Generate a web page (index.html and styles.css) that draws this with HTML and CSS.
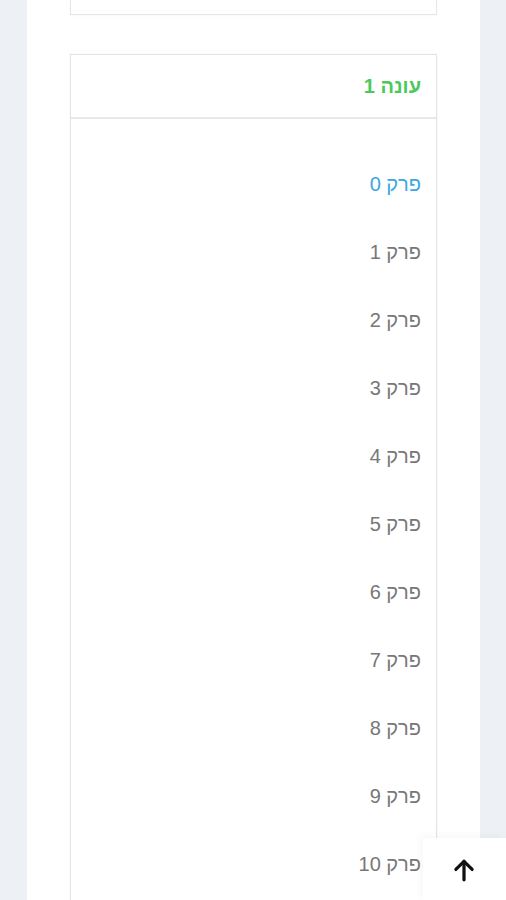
FILE: index.html
```html
<!DOCTYPE html>
<html lang="he" dir="rtl">
<head>
<meta charset="utf-8">
<title>עונה 1</title>
<link rel="stylesheet" href="styles.css">
</head>
<body>
<div class="page">
  <div class="column">
    <div class="top-card"></div>
    <div class="season-card">
      <div class="season-header">עונה 1</div>
      <ul class="episodes">
        <li class="episode active">פרק 0</li>
        <li class="episode">פרק 1</li>
        <li class="episode">פרק 2</li>
        <li class="episode">פרק 3</li>
        <li class="episode">פרק 4</li>
        <li class="episode">פרק 5</li>
        <li class="episode">פרק 6</li>
        <li class="episode">פרק 7</li>
        <li class="episode">פרק 8</li>
        <li class="episode">פרק 9</li>
        <li class="episode">פרק 10</li>
      </ul>
    </div>
  </div>
</div>
<button class="to-top" aria-label="למעלה">
  <svg width="26" height="26" viewBox="0 0 24 24" fill="none" stroke="#111" stroke-width="3" stroke-linecap="round" stroke-linejoin="round"><path d="M12 21V4"/><path d="M4.5 11.5L12 4l7.5 7.5"/></svg>
</button>
</body>
</html>
```
FILE: styles.css
```css
* { box-sizing: border-box; }
html, body { margin: 0; padding: 0; }
body {
  background: #edf1f5;
  font-family: Roboto, "Liberation Sans", sans-serif;
  overflow: hidden;
  height: 900px;
}
.page {
  display: flex;
  justify-content: flex-start;
  direction: ltr;
  padding-left: 27px;
}
.column {
  direction: rtl;
  width: 453px;
  background: #fff;
  min-height: 900px;
  padding: 0 43px 0 43px;
}
.top-card {
  height: 15px;
  border: 1px solid #e6e6e6;
  border-top: none;
  box-shadow: 0 1px 2px rgba(0,0,0,0.03);
}
.season-card {
  margin-top: 39px;
  border: 1px solid #e3e3e3;
  box-shadow: 0 0 2px rgba(0,0,0,0.05);
  padding-bottom: 20px;
}
.season-header {
  height: 64px;
  display: flex;
  align-items: center;
  padding: 0 15px;
  color: #4cc85a;
  font-weight: bold;
  font-size: 20px;
  font-family: "Liberation Sans", Roboto, sans-serif;
  border-bottom: 2px solid #e8e8e8;
}
.season-header, .episode { unicode-bidi: plaintext; }
.episodes {
  list-style: none;
  margin: 0;
  padding: 31px 0 0 0;
}
.episode {
  height: 68px;
  display: flex;
  align-items: center;
  padding: 0 15px;
  font-size: 20px;
  font-family: "Liberation Sans", Roboto, sans-serif;
  color: #777;
}
.episode.active { color: #3aa7e2; }
.to-top {
  position: fixed;
  right: 0;
  bottom: 0;
  width: 83px;
  height: 62px;
  border: none;
  background: #fff;
  box-shadow: -2px -2px 8px rgba(0,0,0,0.04);
  display: flex;
  align-items: center;
  justify-content: center;
  padding: 0;
  cursor: pointer;
}
.to-top svg { display: block; margin-left: -2px; margin-top: 2px; }
```
